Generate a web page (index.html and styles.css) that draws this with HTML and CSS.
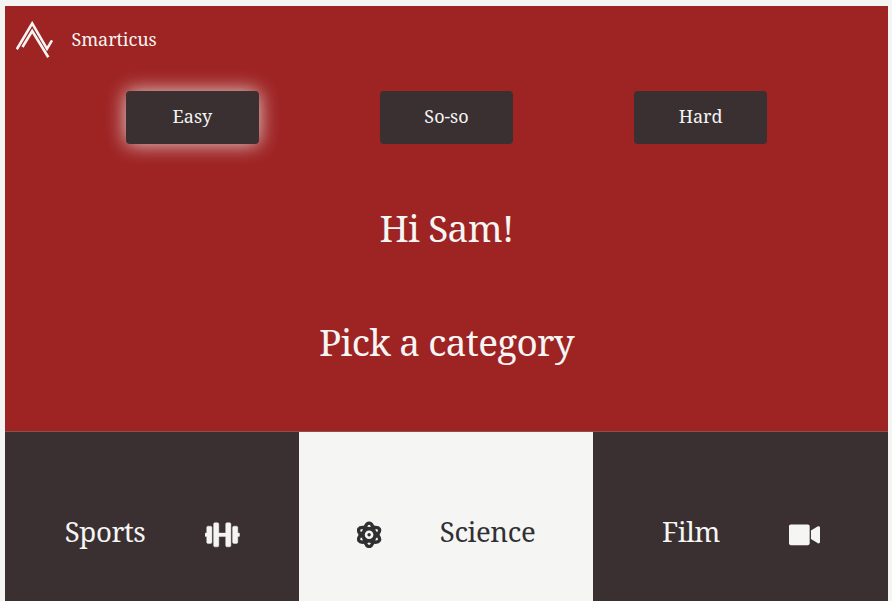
FILE: index.html
```html
<!DOCTYPE html>
<html lang="en">
<head>
<meta charset="utf-8">
<title>Smarticus</title>
<link rel="stylesheet" href="styles.css">
</head>
<body>
<div class="app">
  <header class="brand">
    <svg class="logo" viewBox="0 0 38 38"><path d="M.8 28.300 16.200 2.400 31 27.800 36 19.300M6.500 26 16.200 10 32.300 36.300"/></svg>
    <span class="brand-name">Smarticus</span>
  </header>
  <nav class="levels">
    <button class="level selected"><span>Easy</span></button>
    <button class="level"><span>So-so</span></button>
    <button class="level"><span>Hard</span></button>
  </nav>
  <h1 class="title"><span>Hi Sam!</span></h1>
  <h1 class="title"><span>Pick a category</span></h1>
  <main class="categories">
    <section class="category">
      <span class="label">Sports</span>
      <svg class="icon dumbbell" viewBox="0 0 640 512"><path d="M104 96H56c-13.300 0-24 10.700-24 24v104H8c-4.400 0-8 3.600-8 8v48c0 4.400 3.600 8 8 8h24v104c0 13.300 10.700 24 24 24h48c13.300 0 24-10.700 24-24V120c0-13.300-10.700-24-24-24zm528 128h-24V120c0-13.300-10.700-24-24-24h-48c-13.300 0-24 10.700-24 24v272c0 13.300 10.700 24 24 24h48c13.300 0 24-10.700 24-24V288h24c4.400 0 8-3.600 8-8v-48c0-4.400-3.600-8-8-8zM456 32h-48c-13.300 0-24 10.700-24 24v168H256V56c0-13.300-10.700-24-24-24h-48c-13.300 0-24 10.700-24 24v400c0 13.300 10.700 24 24 24h48c13.300 0 24-10.700 24-24V288h128v168c0 13.300 10.700 24 24 24h48c13.300 0 24-10.700 24-24V56c0-13.300-10.700-24-24-24z"/></svg>
    </section>
    <section class="category light">
      <svg class="icon atom" viewBox="0 0 448 512">
        <g class="orbits">
          <ellipse cx="224" cy="256" rx="98" ry="218"/>
          <ellipse cx="224" cy="256" rx="98" ry="218" transform="rotate(60 224 256)"/>
          <ellipse cx="224" cy="256" rx="98" ry="218" transform="rotate(120 224 256)"/>
        </g>
        <circle class="core" cx="224" cy="256" r="80"/>
        <circle cx="224" cy="256" r="32"/>
      </svg>
      <span class="label">Science</span>
    </section>
    <section class="category">
      <span class="label">Film</span>
      <svg class="icon video" viewBox="0 0 576 512"><path d="M350 64H34C14 64 0 78 0 98v316c0 20 14 34 34 34h316c20 0 34-14 34-34V98c0-20-14-34-34-34zm180 37.700L408 177.300v157.400l122 75.500c20 14.600 46-.3 46-20V121.500c0-20-26-34.400-46-19.800z"/></svg>
    </section>
  </main>
</div>
</body>
</html>
```
FILE: styles.css
```css
* { box-sizing: border-box; }
body {
  margin: 0;
  height: 601px;
  overflow: hidden;
  padding: 6px 4px 0 5px;
  background: #f4f4f2;
  color: #f5f5f3;
  font-family: "Noto Serif", "Droid Serif", "DejaVu Serif Condensed", "DejaVu Serif", serif;
}
.app { background: #9e2323; height: 595px; overflow: hidden; }
.brand { display: flex; align-items: center; height: 67px; padding-left: 10.5px; }
.logo { width: 38px; height: 38px; fill: none; stroke: #f5f5f3; stroke-width: 2.6; }
.brand-name { margin-left: 18px; padding-bottom: 1px; font-size: 18px; letter-spacing: -0.1px; }
.levels { display: flex; justify-content: space-evenly; padding-top: 17.6px; height: 93px; }
.level {
  width: 133.5px;
  height: 53.4px;
  padding: 0 0 3px;
  border: 0;
  border-radius: 4px;
  background: #3a3031;
  color: #f5f5f3;
  font: inherit;
  font-size: 18px;
}
.selected { box-shadow: 0 0 20px rgba(245, 245, 243, 0.85); }
.title {
  display: flex;
  align-items: center;
  justify-content: center;
  height: 114px;
  margin: 0;
  padding-top: 9px;
  font-size: 37px;
  font-weight: 400;
  letter-spacing: -0.7px;
}
.categories {
  display: grid;
  grid-template-columns: 294.4px 1fr 294.6px;
  height: 206px;
  margin-top: 37px;
  border-top: 1px solid #89504e;
}
.category {
  display: flex;
  align-items: center;
  justify-content: space-evenly;
  background: #3a3031;
  font-size: 27.6px;
  letter-spacing: -0.4px;
}
.category.light { background: #f5f5f3; color: #303033; }
.label { padding-bottom: 7px; }
.icon { height: 27.6px; fill: currentColor; }
.dumbbell { width: 34.5px; stroke: currentColor; stroke-width: 8; }
.atom { width: 24.2px; }
.video { width: 31px; }
.orbits { fill: none; stroke: currentColor; stroke-width: 62; }
.core { fill: #f5f5f3; }
```
